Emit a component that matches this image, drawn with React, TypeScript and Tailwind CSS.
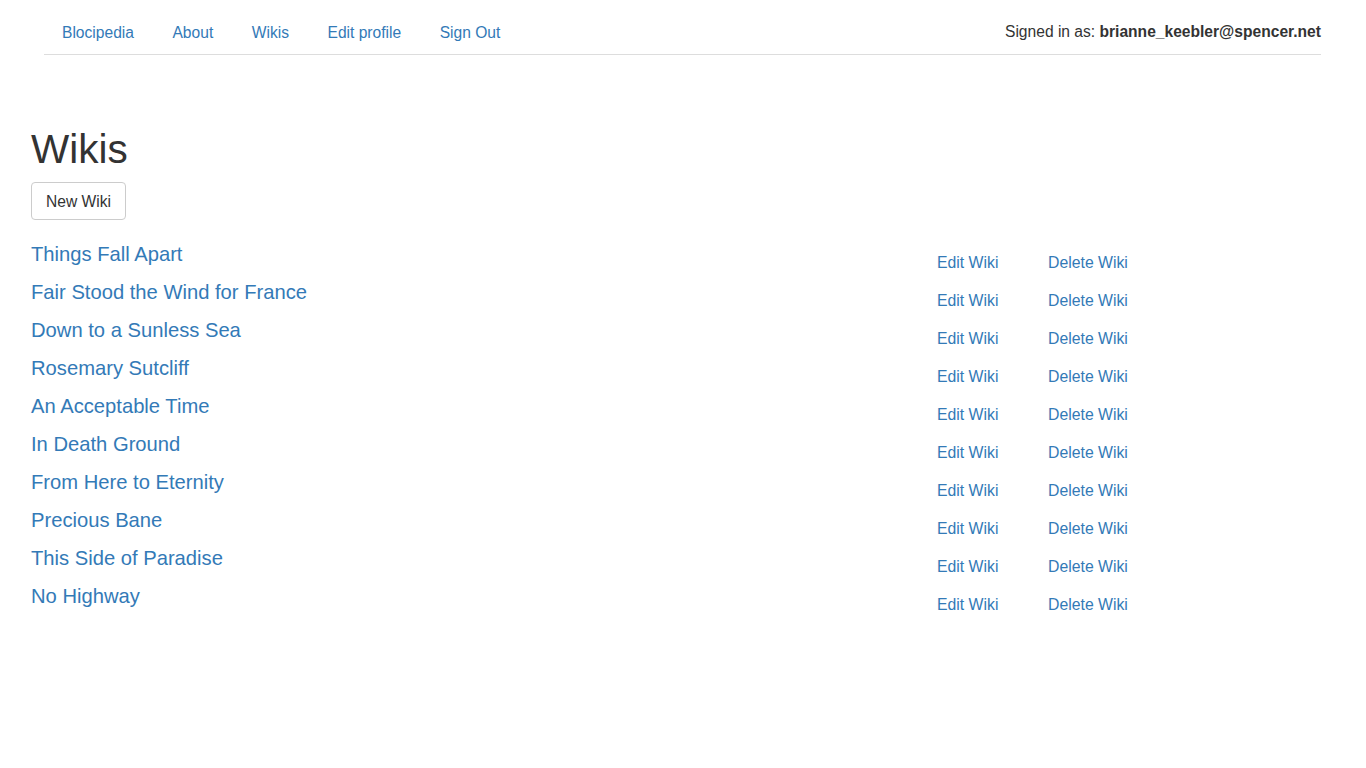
const NAV_LINKS = ["Blocipedia", "About", "Wikis", "Edit profile", "Sign Out"];

const WIKIS = [
  "Things Fall Apart",
  "Fair Stood the Wind for France",
  "Down to a Sunless Sea",
  "Rosemary Sutcliff",
  "An Acceptable Time",
  "In Death Ground",
  "From Here to Eternity",
  "Precious Bane",
  "This Side of Paradise",
  "No Highway",
];

function NavBar() {
  return (
    <nav className="ml-[44px] mr-[45px] flex items-start justify-between border-b border-[#dddddd] pt-[22px] pb-[10px]">
      <ul className="flex gap-[38.5px] pl-[18px]">
        {NAV_LINKS.map((link) => (
          <li key={link}>
            <a href="#" className="block text-[15.6px] leading-[22px] text-[#337ab7]">
              {link}
            </a>
          </li>
        ))}
      </ul>
      <p className="text-[15.6px] leading-[22px] text-[#333333] -mt-[1px]">
        Signed in as: <strong className="font-bold">brianne_keebler@spencer.net</strong>
      </p>
    </nav>
  );
}

function WikiRow({ title }: { title: string }) {
  return (
    <div className="flex h-[38px] items-start">
      <div className="w-[906px]">
        <a href="#" className="text-[20.2px] leading-[22px] text-[#337ab7]">
          {title}
        </a>
      </div>
      <div className="w-[111px] pt-[8px]">
        <a href="#" className="text-[15.8px] leading-[22px] text-[#337ab7]">
          Edit Wiki
        </a>
      </div>
      <div className="pt-[8px]">
        <a href="#" className="text-[15.8px] leading-[22px] text-[#337ab7]">
          Delete Wiki
        </a>
      </div>
    </div>
  );
}

export default function App() {
  return (
    <div
      className="min-h-screen bg-white text-[#333333]"
      style={{ fontFamily: '"Liberation Sans", Arial, Helvetica, sans-serif' }}
    >
      <NavBar />
      <main className="px-[31px] pt-[72px]">
        <h1 className="text-[40.5px] leading-[44px] font-normal text-[#333333]">Wikis</h1>
        <button
          type="button"
          className="mt-[11px] rounded-[4px] border border-[#cccccc] bg-white px-[14px] pt-[7.5px] pb-[6.5px] text-[15.6px] leading-[22px] text-[#333333]"
        >
          New Wiki
        </button>
        <div className="mt-[23px]">
          {WIKIS.map((title) => (
            <WikiRow key={title} title={title} />
          ))}
        </div>
      </main>
    </div>
  );
}
